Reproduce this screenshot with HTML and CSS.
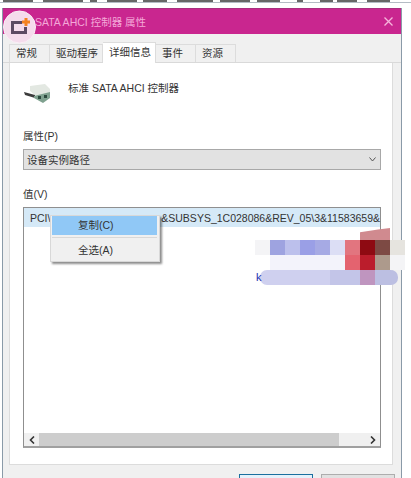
FILE: index.html
```html
<!DOCTYPE html>
<html lang="zh-CN">
<head>
  <meta charset="UTF-8" />
  <meta name="viewport" content="width=device-width, initial-scale=1.0" />
  <title>标准 SATA AHCI 控制器 属性</title>
  <link rel="stylesheet" href="styles.css">
</head>

<body>
  <div class="strip"></div>

  <!-- round badge over the title bar corner -->
  <svg class="badge" width="34" height="34" viewBox="0 0 34 34">
    <circle cx="16.5" cy="17" r="16" fill="#f5dcec" stroke="#fbeef6" stroke-width="1" />
    <path d="M19 12.5 H9.5 V22.5 H22.5 V17" stroke="#5d4a63" stroke-width="3" fill="none" />
    <path d="M23 8 V16 M19 12 H27" stroke="#f58220" stroke-width="3" fill="none" />
  </svg>

  <div class="dialog">
    <div class="titlebar">
      <span class="title">SATA AHCI 控制器 属性</span>
      <svg width="9" height="9" viewBox="0 0 9 9">
        <path d="M0.5 0.5 L8.5 8.5 M8.5 0.5 L0.5 8.5" stroke="#f6b6dc" stroke-width="1.3" fill="none" />
      </svg>
    </div>

    <div class="tabs">
      <span class="tab narrow first">常规</span>
      <span class="tab wide">驱动程序</span>
      <span class="tab wide active">详细信息</span>
      <span class="tab narrow">事件</span>
      <span class="tab narrow">资源</span>
    </div>

    <div class="panel">
      <div class="device">
        <svg class="device-icon" width="28" height="22" viewBox="0 0 28 22">
          <path d="M7 3 L22 1 L27 6 L27 11 L13 13 L7 8 Z" fill="#e3e8e2" />
          <path d="M1 9 L12 12 L12 15 L2 12 Z" fill="#3c3c3c" />
          <path d="M11 13 L27 9 L27 15 L20 20 L11 15 Z" fill="#7fa18f" />
          <rect x="15" y="13" width="3" height="3" fill="#2c4a3e" />
          <rect x="21" y="12" width="3" height="3" fill="#2c4a3e" />
        </svg>
        <span class="device-name">标准 SATA AHCI 控制器</span>
      </div>

      <label class="field-label">属性(P)</label>
      <div class="select">
        <span>设备实例路径</span>
        <svg width="7" height="5" viewBox="0 0 7 5">
          <path d="M0.5 0.5 L3.5 4 L6.5 0.5" stroke="#555" stroke-width="1" fill="none" />
        </svg>
      </div>

      <label class="field-label value-label">值(V)</label>
      <div class="listbox">
        <div class="list-row">
          <span>PCI\</span>
          <span>&amp;SUBSYS_1C028086&amp;REV_05\3&amp;11583659&amp;</span>
        </div>
        <div class="list-body"></div>
        <div class="scrollbar">
          <div class="scroll-btn">
            <svg width="6" height="8" viewBox="0 0 6 8"><path d="M5 0.5 L1.5 4 L5 7.5" stroke="#333" stroke-width="1.6" fill="none" /></svg>
          </div>
          <div class="scroll-track"><div class="scroll-thumb"></div></div>
          <div class="scroll-btn">
            <svg width="6" height="8" viewBox="0 0 6 8"><path d="M1 0.5 L4.5 4 L1 7.5" stroke="#333" stroke-width="1.6" fill="none" /></svg>
          </div>
        </div>

        <div class="menu">
          <div class="menu-item selected">复制(C)</div>
          <div class="menu-sep"></div>
          <div class="menu-item tall">全选(A)</div>
        </div>

        <!-- mosaic over the private part of the value -->
        <div class="mosaic">
          <div class="mosaic-cap"></div>
          <span class="mosaic-letter">k</span>
          <i class="c-faint"></i><i class="c-blue1"></i><i class="c-blue2"></i><i class="c-blue3"></i><i class="c-blue4"></i><i class="c-blue5"></i><i class="c-red1"></i><i class="c-red2"></i><i class="c-brown"></i><i class="c-grey"></i>
          <i></i><i class="c-pale"></i><i class="c-pale"></i><i class="c-pale"></i><i class="c-pale"></i><i class="c-pale"></i><i class="c-red3"></i><i class="c-red4"></i><i class="c-tan"></i><i class="c-faint"></i>
          <i class="c-lilac bar-start"></i><i class="c-lilac"></i><i class="c-lilac"></i><i class="c-lilac"></i><i class="c-lilac"></i><i class="c-lilac2"></i><i class="c-lilac2"></i><i class="c-plum"></i><i class="c-lilac3"></i><i class="c-lilac3 bar-end"></i>
        </div>
      </div>
    </div>

    <div class="buttons">
      <div class="btn primary"></div>
      <div class="btn"></div>
    </div>
  </div>
</body>
</html>
```

FILE: styles.css
```css
body {
  margin: 0;
  background: #fff;
  font-family: "Liberation Sans", "Noto Sans CJK SC", sans-serif;
  font-size: 10.5px;
  color: #333;
  height: 478px;
  overflow: hidden;
  position: relative;
}

/* cut-off line of text above the window */
.strip {
  height: 3px;
  margin-bottom: 5px;
  box-sizing: border-box;
  border-bottom: 1px solid #b4bcc4;
  background: linear-gradient(to right,
    #fff 3px, #666 3px, #666 33px, #fff 33px,
    #fff 43px, #666 43px, #666 83px, #fff 83px,
    #fff 90px, #666 90px, #666 97px, #fff 97px,
    #fff 107px, #666 107px, #666 137px, #fff 137px,
    #fff 143px, #666 143px, #666 167px, #fff 167px,
    #fff 177px, #666 177px, #666 213px, #fff 213px,
    #fff 220px, #666 220px, #666 250px, #fff 250px,
    #fff 257px, #666 257px, #666 280px, #fff 280px,
    #fff 297px, #666 297px, #666 303px, #fff 303px,
    #fff 320px, #666 320px, #666 333px, #fff 333px,
    #fff 337px, #666 337px, #666 357px, #fff 357px,
    #fff 367px, #666 367px, #666 390px, #fff 390px);
}

.badge {
  position: absolute;
  left: 3px;
  top: 10px;
}

.dialog {
  width: 398px;
  height: 480px;
  margin-left: 2px;
  background: #f0f0f0;
  border-left: 1px solid #8a9aa8;
  border-right: 1px solid #8a9aa8;
}

.titlebar {
  height: 26px;
  box-sizing: border-box;
  background: #c9268f;
  border-top: 1px solid #a8307f;
  display: flex;
  align-items: center;
  justify-content: space-between;
  padding: 0 8px 0 32px;
}

.title {
  color: #f4a8d8;
}

.tabs {
  height: 29px;
  box-sizing: border-box;
  padding-left: 6px;
  display: flex;
  align-items: flex-end;
  border-bottom: 1px solid #d9d9d9;
}

.tab {
  height: 18px;
  line-height: 17px;
  box-sizing: border-box;
  padding-left: 6px;
  border: 1px solid #dcdcdc;
  border-bottom: none;
  border-left: none;
}

.tab.narrow { width: 40px; }
.tab.wide { width: 53px; }

.tab.first {
  width: 41px;
  border-left: 1px solid #dcdcdc;
}

.tab.active {
  height: 21px;
  line-height: 18px;
  background: #fff;
  margin-bottom: -1px;
  position: relative;
}

.panel {
  width: 384px;
  height: 402px;
  margin-left: 6px;
  box-sizing: border-box;
  background: #fff;
  border: 1px solid #dcdcdc;
  border-top: none;
  padding: 16px 0 0 13px;
}

.device {
  display: flex;
  align-items: flex-start;
  gap: 17px;
  height: 49px;
}

.device-icon {
  margin-top: 4px;
}

.device-name {
  line-height: 18px;
}

.field-label {
  display: block;
  line-height: 16px;
}

.select {
  height: 21px;
  width: 358px;
  margin-top: 5px;
  box-sizing: border-box;
  background: #e2e2e2;
  border: 1px solid #a8a8a8;
  display: flex;
  align-items: center;
  justify-content: space-between;
  padding: 0 4px 0 3px;
}

.value-label {
  margin-top: 16px;
}

.listbox {
  width: 358px;
  height: 241px;
  margin-top: 5px;
  box-sizing: border-box;
  border: 1px solid #8f8f8f;
  border-bottom: 2px solid #a0a0a0;
  display: flex;
  flex-direction: column;
  position: relative;
}

.list-row {
  height: 19px;
  background: #d5e9f7;
  display: flex;
  justify-content: space-between;
  align-items: center;
  padding: 0 0 0 6px;
  white-space: nowrap;
}

.list-body {
  flex: 1;
}

.scrollbar {
  height: 13px;
  background: #f0f0f0;
  display: flex;
}

.scroll-btn {
  width: 15px;
  display: flex;
  align-items: center;
  justify-content: center;
}

.scroll-track {
  flex: 1;
}

.scroll-thumb {
  width: 300px;
  height: 13px;
  background: #cdcdcd;
}

.menu {
  position: absolute;
  left: 26px;
  top: 7px;
  width: 110px;
  box-sizing: border-box;
  background: #f0f0f0;
  box-shadow: 2px 2px 2px rgba(0, 0, 0, 0.45);
  border: 1px solid #d8d8d8;
  padding: 0 2px 0 1px;
}

.menu-item {
  height: 19px;
  line-height: 19px;
  padding-left: 26px;
}

.menu-item.tall {
  height: 22px;
  line-height: 22px;
}

.menu-item.selected {
  background: #90c8f6;
}

.menu-sep {
  height: 1px;
  background: #d8d8d8;
  margin: 2px 0 1px;
}

.mosaic {
  position: absolute;
  left: 231px;
  top: 32px;
  display: grid;
  grid-template-columns: repeat(10, 15px);
  grid-auto-rows: 15px;
}

.mosaic-cap {
  position: absolute;
  left: 105px;
  bottom: 100%;
  width: 30px;
  height: 12px;
  background: #d08a8f;
  clip-path: polygon(0 35%, 60% 12%, 100% 0, 100% 100%, 0 100%);
}

.mosaic-letter {
  position: absolute;
  left: 1px;
  top: 30px;
  line-height: 15px;
  font-size: 11px;
  color: #2230b0;
}

.c-faint { background: #f4f4f6; }
.c-blue1 { background: #9ea3e0; }
.c-blue2 { background: #bcc0ec; }
.c-blue3 { background: #9a9fe6; }
.c-blue4 { background: #a6aae4; }
.c-blue5 { background: #dcdef5; }
.c-red1 { background: #e2757f; }
.c-red2 { background: #8e0a12; }
.c-brown { background: #7d4a44; }
.c-grey { background: #e6e4df; }
.c-pale { background: #f3f3fb; }
.c-red3 { background: #e4636f; }
.c-red4 { background: #bb1d2c; }
.c-tan { background: #ad9a8c; }
.c-lilac { background: #cfd0ef; }
.c-lilac2 { background: #c3c5e8; }
.c-lilac3 { background: #bcbfe2; }
.c-plum { background: #bf95bf; }

.bar-start {
  margin-left: 5px;
  border-radius: 7px 0 0 7px;
}

.bar-end {
  margin-right: 7px;
  border-radius: 0 7px 7px 0;
}

.buttons {
  display: flex;
  justify-content: flex-end;
  gap: 8px;
  padding: 9px 6px 0 0;
}

.btn {
  width: 74px;
  height: 21px;
  box-sizing: border-box;
  background: #e1e1e1;
  border: 1px solid #adadad;
}

.btn.primary {
  border: 1px solid #1b6f9f;
  background: #e5f1fb;
}
```
